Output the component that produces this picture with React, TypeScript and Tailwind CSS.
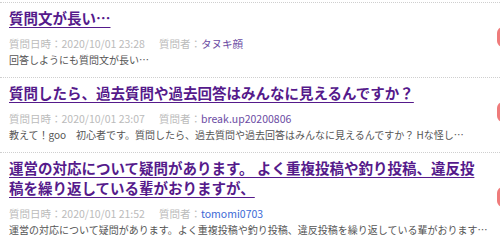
import React from 'react';

type Question = {
  title: string;
  date: string;
  author: string;
  visited: boolean;
  snippet: string;
};

const questions: Question[] = [
  {
    title: '質問文が長い…',
    date: '2020/10/01 23:28',
    author: 'タヌキ顔',
    visited: true,
    snippet: '回答しようにも質問文が長い…',
  },
  {
    title: '質問したら、過去質問や過去回答はみんなに見えるんですか？',
    date: '2020/10/01 23:07',
    author: 'break.up20200806',
    visited: true,
    snippet:
      '教えて！goo　初心者です。質問したら、過去質問や過去回答はみんなに見えるんですか？ Hな怪し…',
  },
  {
    title:
      '運営の対応について疑問があります。 よく重複投稿や釣り投稿、違反投稿を繰り返している輩がおりますが、',
    date: '2020/10/01 21:52',
    author: 'tomomi0703',
    visited: false,
    snippet:
      '運営の対応について疑問があります。よく重複投稿や釣り投稿、違反投稿を繰り返している輩がおります…',
  },
];

const QuestionRow = ({ q }: { q: Question }) => {
  return (
    <li className="flex items-center border-b border-dotted border-[#cfcfcf]">
      <div className="w-[488px] shrink-0 pl-[9px] pt-[5px] pb-[9px]">
        <p className="text-[14.5px] font-bold leading-[20px]">
          <a className="text-[#551a8b] underline underline-offset-[3px] decoration-[1px]">{q.title}</a>
        </p>
        <p className="mt-[8px] text-[10.5px] leading-[16px] text-[#bbbbbb] whitespace-nowrap">
          <span>質問日時：</span>
          <span>{q.date}</span>
          <span className="ml-[14px]">質問者：</span>
          <span className={q.visited ? 'text-[#6b4ba3]' : 'text-[#3c6ad6]'}>{q.author}</span>
        </p>
        <p className="text-[10px] leading-[16px] text-[#555555] whitespace-nowrap">{q.snippet}</p>
      </div>
      <div className="ml-[9px] mb-[6px] h-[20px] w-[40px] shrink-0 rounded-md bg-[#ef7b7b]" />
    </li>
  );
};

export default function App() {
  return (
    <div
      className="w-[500px] h-[246px] overflow-hidden bg-white"
      style={{ fontFamily: '"Noto Sans CJK JP", "Noto Sans", sans-serif' }}
    >
      <ul className="mt-[2px] border-t border-dotted border-[#cfcfcf]">
        {questions.map((q) => (
          <QuestionRow key={q.date} q={q} />
        ))}
      </ul>
    </div>
  );
}
